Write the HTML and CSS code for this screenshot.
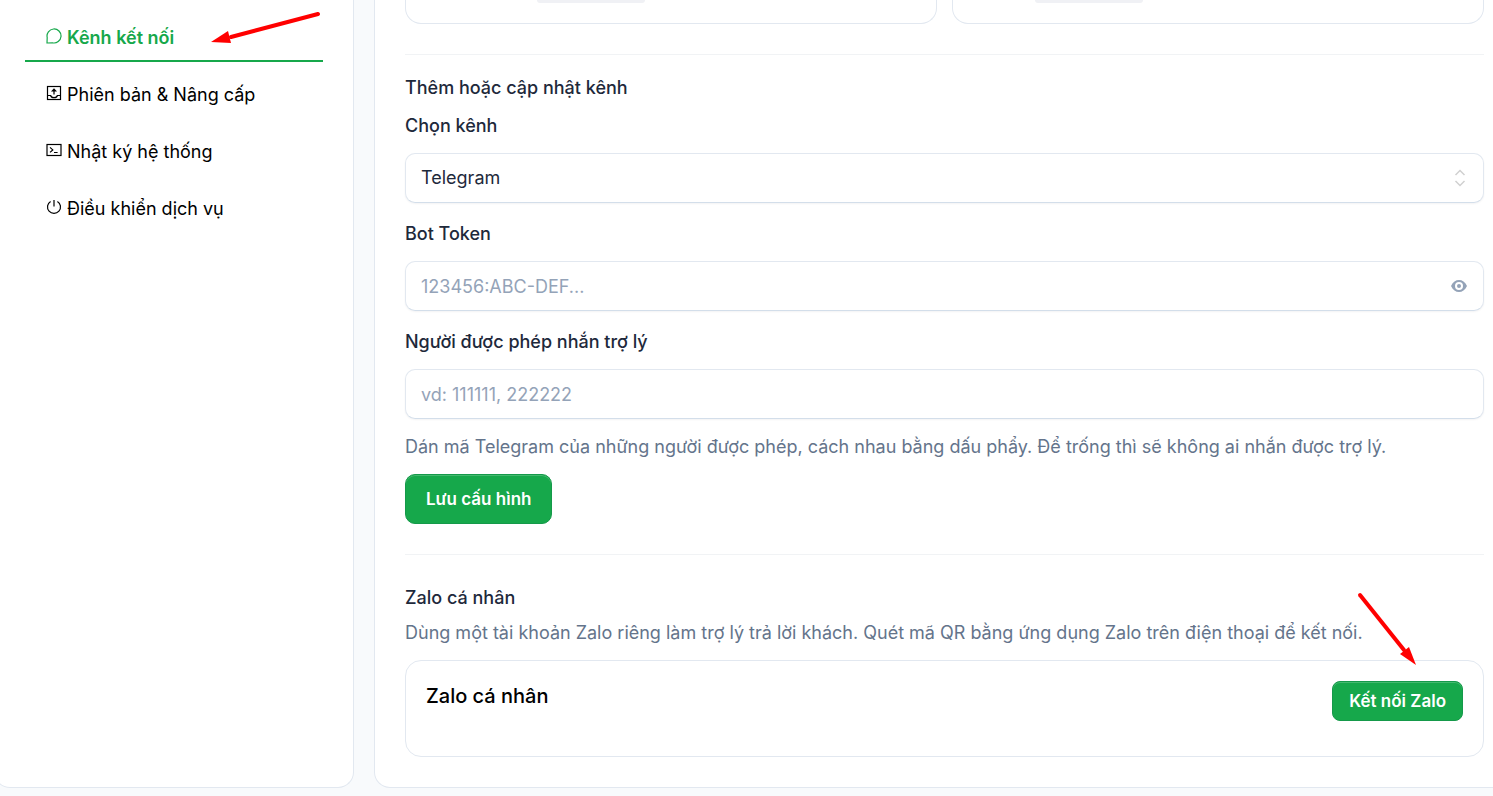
FILE: index.html
```
<!DOCTYPE html>
<html lang="vi">
<head>
    <meta charset="UTF-8">
    <meta name="viewport" content="width=device-width, initial-scale=1.0">
    <title>Kênh kết nối</title>
    <link rel="stylesheet" href="styles.css">
</head>
<body>
    <div class="page">
        <nav class="sidebar">
            <a href="#channels" class="nav-item active">
                <svg class="icon" viewBox="0 0 16 16"><path d="M1 15L1.2 9.5A7 7 0 1 1 6.5 14.8Z"/></svg>
                Kênh kết nối
            </a>
            <a href="#upgrade" class="nav-item">
                <svg class="icon" viewBox="0 0 16 16"><rect x="1.5" y="1.5" width="13" height="13"/><path d="M1.6 10.5H4.6C5.4 13.4 10.6 13.4 11.4 10.5H14.4M8 9.5V5"/><path d="M8 3.2L11 6.6H5Z" fill="currentColor" stroke="none"/></svg>
                Phiên bản &amp; Nâng cấp
            </a>
            <a href="#logs" class="nav-item">
                <svg class="icon" viewBox="0 0 16 16"><rect x="1" y="2.5" width="14" height="11"/><path d="M4 5.4L6.8 7.9L4 10.4M8 10.5H11.6"/></svg>
                Nhật ký hệ thống
            </a>
            <a href="#service" class="nav-item">
                <svg class="icon" viewBox="0 0 16 16"><path d="M8 1V7.6M4.6 2.4A6.5 6.5 0 1 0 11.4 2.4"/></svg>
                Điều khiển dịch vụ
            </a>
            <svg class="arrow arrow-nav" viewBox="0 0 112 34"><path d="M109 4L22 27" stroke="#ff0000" stroke-width="4" stroke-linecap="round"/><path d="M2 32L19 21L22 33Z" fill="#ff0000"/></svg>
        </nav>

        <main class="content">
            <div class="channels">
                <div class="card channel channel-first"><span class="badge"></span></div>
                <div class="card channel channel-second"><span class="badge"></span></div>
            </div>

            <form class="section channel-form">
                <h3>Thêm hoặc cập nhật kênh</h3>
                <label for="channel">Chọn kênh</label>
                <div class="field">
                    <select id="channel">
                        <option>Telegram</option>
                    </select>
                    <svg class="chevrons" viewBox="0 0 12 18"><path d="M1.5 6L6 1.5L10.5 6M1.5 12L6 16.5L10.5 12"/></svg>
                </div>
                <label for="token">Bot Token</label>
                <div class="field">
                    <input type="password" id="token" placeholder="123456:ABC-DEF...">
                    <button type="button" class="eye" aria-label="Hiện token">
                        <svg viewBox="0 0 18 14"><path fill-rule="evenodd" d="M1 7C3 2.8 5.7 1 9 1S15 2.8 17 7C15 11.2 12.3 13 9 13S3 11.2 1 7ZM9 3A4 4 0 1 0 9 11A4 4 0 1 0 9 3ZM9 5A2 2 0 1 1 9 9A2 2 0 1 1 9 5Z"/></svg>
                    </button>
                </div>
                <label for="allowed">Người được phép nhắn trợ lý</label>
                <div class="field">
                    <input type="text" id="allowed" placeholder="vd: 111111, 222222">
                </div>
                <p class="hint">Dán mã Telegram của những người được phép, cách nhau bằng dấu phẩy. Để trống thì sẽ không ai nhắn được trợ lý.</p>
                <button type="button" class="btn btn-save">Lưu cấu hình</button>
            </form>

            <section class="section zalo">
                <h3>Zalo cá nhân</h3>
                <p class="hint">Dùng một tài khoản Zalo riêng làm trợ lý trả lời khách. Quét mã QR bằng ứng dụng Zalo trên điện thoại để kết nối.</p>
                <div class="card zalo-card">
                    <h4>Zalo cá nhân</h4>
                    <button type="button" class="btn btn-small">Kết nối Zalo</button>
                    <svg class="arrow arrow-zalo" viewBox="0 0 60 74"><path d="M3 3L47 58" stroke="#ff0000" stroke-width="4" stroke-linecap="round"/><path d="M59 73L43 62L52 55Z" fill="#ff0000"/></svg>
                </div>
            </section>
        </main>
    </div>
</body>
</html>
```
FILE: styles.css
```
* {
    box-sizing: border-box;
}
body {
    margin: 0;
    font-family: Inter, "Noto Sans", sans-serif;
    font-size: 18px;
    line-height: 24px;
    color: #1e293b;
    background-color: #f8fafc;
    overflow-x: hidden;
}
h3, h4, p {
    margin: 0;
    font-weight: 400;
}
.page {
    display: flex;
    gap: 20px;
    margin: 0 -22px 0 -6px;
    padding-bottom: 8px;
}
.sidebar, .content {
    background: white;
    border: 1px solid #e2e8f0;
    border-top: 0;
    border-radius: 0 0 16px 16px;
}
.sidebar {
    position: relative;
    flex: 0 0 360px;
    display: flex;
    flex-direction: column;
    gap: 11px;
    padding: 16px 30px 30px;
}
.nav-item {
    display: flex;
    gap: 5px;
    padding: 10px 21px;
    border-bottom: 2px solid transparent;
    color: black;
    text-decoration: none;
}
.nav-item.active {
    color: #16a84b;
    border-bottom-color: #16a84b;
    font-weight: 600;
}
.icon {
    width: 16px;
    height: 16px;
    margin-top: 2px;
    fill: none;
    stroke: currentColor;
    stroke-width: 1.2;
}
.arrow {
    position: absolute;
    fill: none;
    pointer-events: none;
}
.arrow-nav {
    top: 10px;
    right: 32px;
    width: 112px;
    height: 34px;
}
.content {
    flex: 1;
    padding: 0 30px 30px;
}
.channels {
    display: grid;
    grid-template-columns: 1fr 1fr;
    gap: 15px;
    margin-bottom: 30px;
}
.card {
    border: 1px solid #e2e8f0;
    border-radius: 16px;
}
.channel {
    border-top: 0;
    border-radius: 0 0 16px 16px;
    padding-bottom: 20px;
}
.channel-first {
    padding-left: 131px;
}
.channel-second {
    padding-left: 82px;
}
.badge {
    display: block;
    width: 108px;
    height: 3px;
    border-radius: 0 0 8px 8px;
    background: #f0f1f5;
}
.section {
    border-top: 1px solid #f1f3f5;
}
.channel-form {
    padding: 21px 0 30px;
}
h3 {
    font-size: 18px;
    font-weight: 500;
}
label {
    display: block;
    margin: 19px 0 15px;
    font-weight: 500;
}
h3 + label {
    margin-top: 14px;
}
.field {
    position: relative;
}
.field input, .field select {
    display: block;
    width: 100%;
    height: 50px;
    padding: 0 15px;
    font: inherit;
    color: #1e293b;
    background: white;
    border: 1px solid #e2e8f0;
    border-bottom-color: #d3deea;
    border-radius: 10px;
    box-shadow: 0 1px 2px rgba(15, 23, 42, 0.05);
    appearance: none;
}
.field input::placeholder {
    color: #94a3b8;
    opacity: 1;
}
.chevrons {
    position: absolute;
    top: 16px;
    right: 18px;
    width: 12px;
    height: 18px;
    fill: none;
    stroke: #d0d0d0;
    stroke-width: 1.5;
    pointer-events: none;
}
.eye {
    position: absolute;
    top: 18px;
    right: 16px;
    padding: 0;
    border: 0;
    background: none;
}
.eye svg {
    display: block;
    width: 18px;
    height: 14px;
    fill: #94a3b8;
}
.hint {
    color: #64748b;
}
.field + .hint {
    margin: 16px 0 15px;
}
.btn {
    display: block;
    font: inherit;
    font-size: 17px;
    font-weight: 600;
    color: white;
    background: #16a84b;
    border: 1px solid #15994a;
    border-radius: 10px;
    box-shadow: inset 0 1px 0 rgba(255, 255, 255, 0.2);
}
.btn-save {
    height: 50px;
    padding: 0 20px;
}
.btn-small {
    height: 40px;
    padding: 0 16px;
    border-radius: 8px;
}
.zalo {
    padding-top: 31px;
}
.zalo .hint {
    margin: 11px 0 15px;
}
.zalo-card {
    position: relative;
    display: flex;
    justify-content: space-between;
    align-items: flex-start;
    padding: 20px 20px 35px;
}
h4 {
    font-size: 20px;
    line-height: 30px;
    font-weight: 500;
    color: black;
}
.arrow-zalo {
    top: -69px;
    right: 66px;
    width: 60px;
    height: 74px;
}
```
